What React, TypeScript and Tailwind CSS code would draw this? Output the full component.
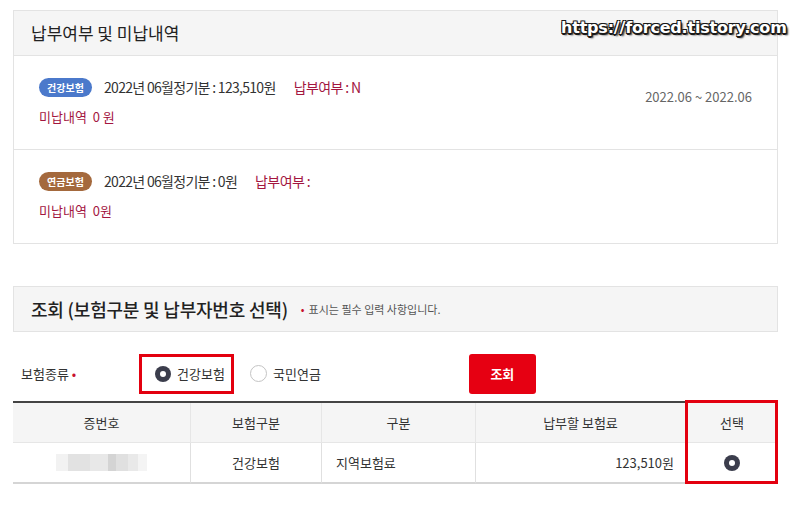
const KR = "font-['Noto_Sans_CJK_KR','Noto_Sans',sans-serif]"

function Radio({ checked }: { checked: boolean }) {
  return checked ? (
    <span className="inline-flex h-4 w-4 items-center justify-center rounded-full bg-[#3b3d4c]">
      <span className="h-[6px] w-[6px] rounded-full bg-white" />
    </span>
  ) : (
    <span className="inline-block h-[17px] w-[17px] rounded-full border border-[#c4c4c4] bg-white" />
  )
}

function Badge({ label, color }: { label: string; color: string }) {
  return (
    <span className={`inline-flex h-[19px] w-[53px] items-center justify-center rounded-full text-[10px] font-bold text-white ${color}`}>
      {label}
    </span>
  )
}

const rows = [
  { badge: '건강보험', color: 'bg-[#4b79cb]', text: '2022년 06월정기분 : 123,510원', paid: '납부여부 : N', unpaid: '미납내역  0 원', period: '2022.06 ~ 2022.06' },
  { badge: '연금보험', color: 'bg-[#a4693d]', text: '2022년 06월정기분 : 0원', paid: '납부여부 :', unpaid: '미납내역  0원', period: '' },
]

export default function App() {
  return (
    <div className={`relative h-[507px] w-[795px] bg-white pl-[13px] pt-[10px] text-[#333] ${KR}`}>
      {/* watermark */}
      <div className="absolute left-[561px] top-[16px] font-['DejaVu_Sans',sans-serif] text-[16px] font-bold tracking-[-0.2px] text-white [text-shadow:-1px_-1px_0_#1a1a1a,1px_-1px_0_#1a1a1a,-1px_1px_0_#1a1a1a,1px_1px_0_#1a1a1a,0_2px_0_#1a1a1a,2px_2px_2px_#000]">
        https://forced.tistory.com
      </div>

      {/* 납부여부 및 미납내역 */}
      <div className="w-[765px] border border-[#e3e3e3]">
        <div className="flex h-[45px] items-center border-b border-[#e3e3e3] bg-[#f5f5f5] pl-[17px] text-[17px] text-[#222]">
          납부여부 및 미납내역
        </div>
        {rows.map((r, i) => (
          <div key={i} className={`flex justify-between pl-[25px] pr-[25px] pt-[21px] pb-[22px] ${i > 0 ? 'border-t border-[#e3e3e3]' : ''}`}>
            <div>
              <div className="flex h-5 items-center text-[14px]">
                <Badge label={r.badge} color={r.color} />
                <span className="ml-[12px] tracking-[-0.7px] text-[#333]">{r.text}</span>
                <span className="ml-[18px] tracking-[-0.6px] text-[#a3163f]">{r.paid}</span>
              </div>
              <div className="mt-[10px] flex h-5 items-center whitespace-pre text-[13px] text-[#a3163f]">{r.unpaid}</div>
            </div>
            {r.period && <div className="mt-[10px] h-5 text-[13px] leading-5 text-[#666]">{r.period}</div>}
          </div>
        ))}
      </div>

      {/* 조회 */}
      <div className="mt-[42px] flex h-[46px] w-[765px] items-center border border-[#e3e3e3] bg-[#f5f5f5] pl-[17px]">
        <span className="text-[18px] font-medium tracking-[-0.2px] text-[#222]">조회 (보험구분 및 납부자번호 선택)</span>
        <span className="ml-[13px] text-[11px] text-[#555]">
          <span className="mr-[4px] text-[#c8102e]">•</span>표시는 필수 입력 사항입니다.
        </span>
      </div>

      <div className="mt-[21px] flex h-[41px] items-center">
        <span className="ml-[8px] w-[118px] text-[13px] text-[#333]">
          보험종류 <span className="text-[#c8102e]">•</span>
        </span>
        <label className="flex h-[40px] w-[95px] items-center gap-[6px] border-[3px] border-[#e3000f] pl-[13px] text-[13px]">
          <Radio checked />
          건강보험
        </label>
        <label className="ml-[16px] flex items-center gap-[6px] text-[13px]">
          <Radio checked={false} />
          국민연금
        </label>
        <button className="ml-[148px] flex h-[40px] w-[67px] items-center justify-center rounded-[3px] bg-[#e60012] text-[13px] font-bold text-white">
          조회
        </button>
      </div>

      {/* table */}
      <div className="relative mt-[7px] w-[765px]">
        <div className="grid grid-cols-[178px_131px_154px_210px_92px] border-t-2 border-[#444] text-[13px]">
          {['증번호', '보험구분', '구분', '납부할 보험료', '선택'].map((h, i) => (
            <div key={h} className={`flex h-[40px] items-center justify-center border-b border-[#e6e6e6] bg-[#f5f5f5] ${i < 4 ? 'border-r' : ''}`}>
              {h}
            </div>
          ))}
          <div className="flex h-[41px] items-center justify-center border-r border-b-2 border-[#e0e0e0] border-b-[#d5d5d5]">
            <div className="flex h-[17px]">
              <span className="w-[12px] bg-[#f2f2f2]" />
              <span className="w-[22px] bg-[#e2e2e2]" />
              <span className="w-[18px] bg-[#e8e8e8]" />
              <span className="w-[8px] bg-[#d4d4d4]" />
              <span className="w-[12px] bg-[#e0e0e0]" />
              <span className="w-[10px] bg-[#e9e9e9]" />
              <span className="w-[9px] bg-[#f4f4f4]" />
            </div>
          </div>
          <div className="flex h-[41px] items-center justify-center border-r border-b-2 border-[#e0e0e0] border-b-[#d5d5d5]">건강보험</div>
          <div className="flex h-[41px] items-center border-r border-b-2 border-[#e0e0e0] border-b-[#d5d5d5] pl-[14px]">지역보험료</div>
          <div className="flex h-[41px] items-center justify-end border-r border-b-2 border-[#e0e0e0] border-b-[#d5d5d5] pr-[11px]">123,510원</div>
          <div className="flex h-[41px] items-center justify-center border-b-2 border-b-[#d5d5d5]">
            <Radio checked />
          </div>
        </div>
        <div className="pointer-events-none absolute left-[672px] top-[-1px] h-[84px] w-[93px] border-[3px] border-[#e3000f]" />
      </div>
    </div>
  )
}
